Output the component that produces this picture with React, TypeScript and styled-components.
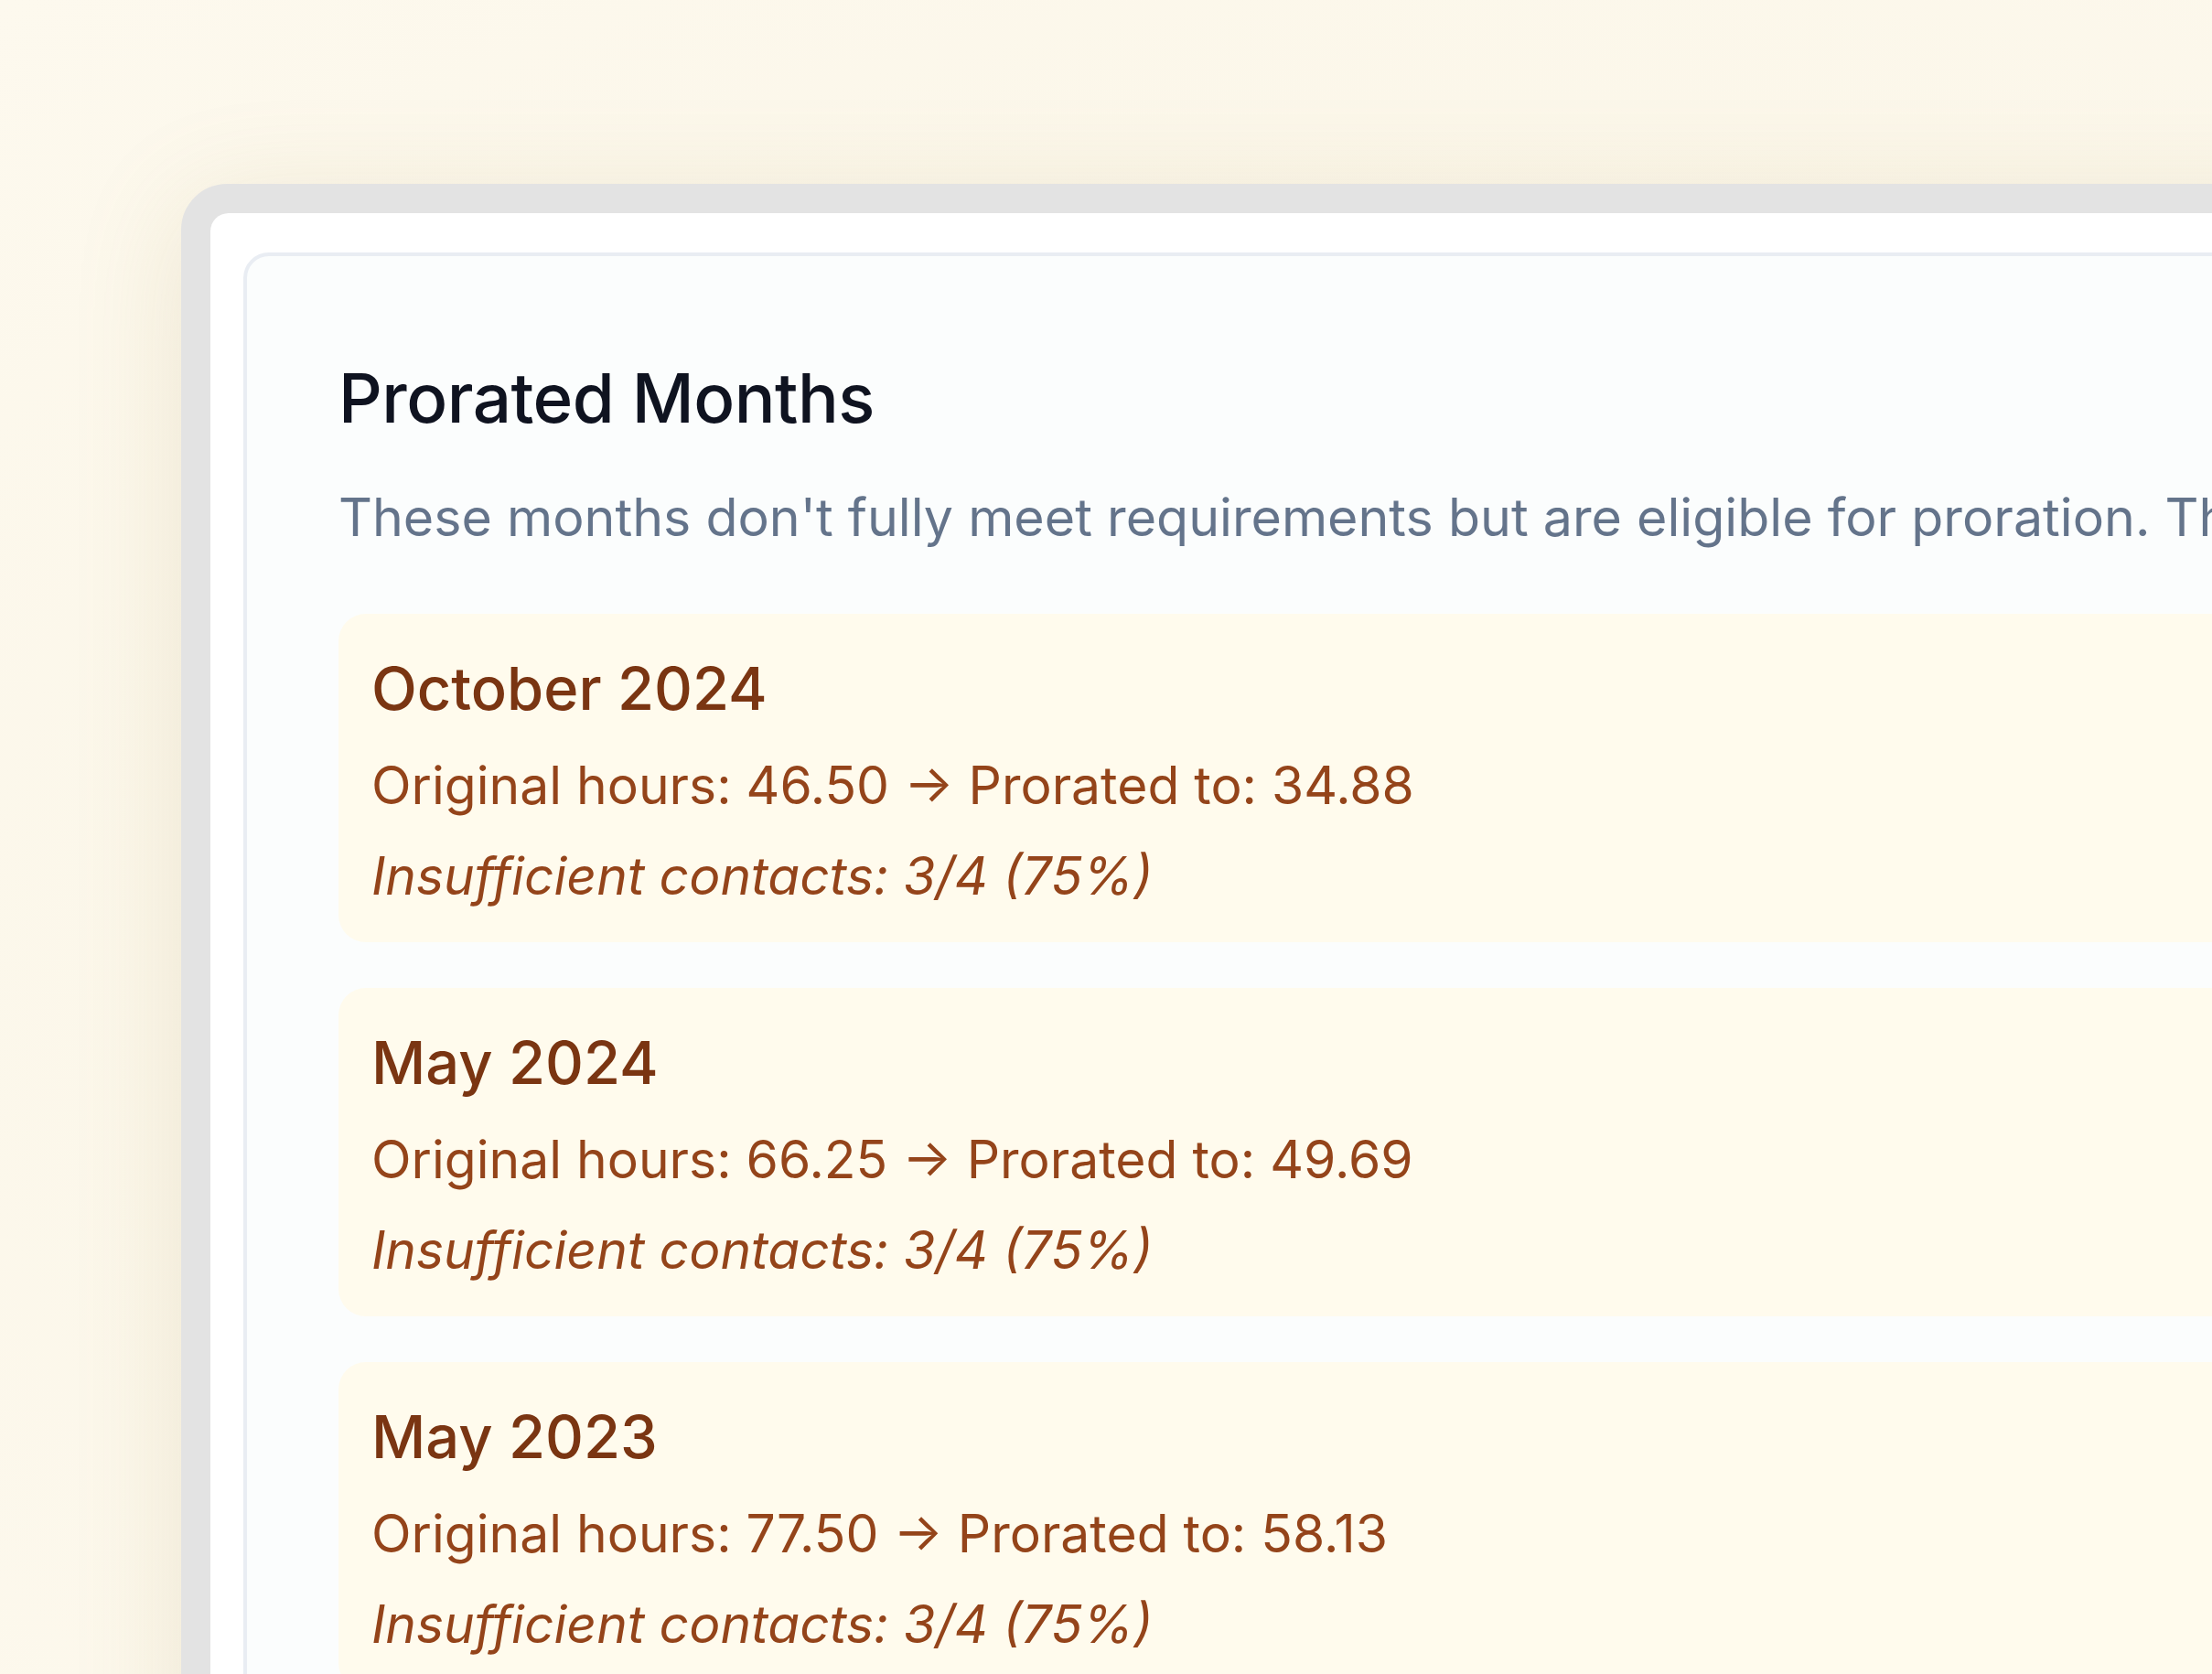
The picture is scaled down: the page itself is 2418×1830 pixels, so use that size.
import styled, { createGlobalStyle } from 'styled-components';

const GlobalStyle = createGlobalStyle`
	html, body {
		margin: 0;
		padding: 0;
		overflow: hidden;
		background: #fdf8ec;
	}
	body {
		font-family: Inter, 'Noto Sans', 'Liberation Sans', sans-serif;
		-webkit-font-smoothing: antialiased;
	}
`;

type ProratedMonth = {
	label: string;
	original: string;
	prorated: string;
	contacts: string;
};

const months: ProratedMonth[] = [
	{ label: 'October 2024', original: '46.50', prorated: '34.88', contacts: '3/4 (75%)' },
	{ label: 'May 2024', original: '66.25', prorated: '49.69', contacts: '3/4 (75%)' },
	{ label: 'May 2023', original: '77.50', prorated: '58.13', contacts: '3/4 (75%)' },
];

const App = () => {
	return (
		<>
			<GlobalStyle />
			<Page>
				<Frame>
					<Window>
						<Panel>
							<Title>Prorated Months</Title>
							<Subtitle>
								These months don't fully meet requirements but are eligible for proration. The
								hours below have been adjusted to reflect the contacts completed.
							</Subtitle>
							<MonthList>
								{months.map((m) => (
									<MonthCard key={m.label}>
										<MonthName>{m.label}</MonthName>
										<MonthLine>
											Original hours: {m.original} → Prorated to: {m.prorated}
										</MonthLine>
										<MonthNote>Insufficient contacts: {m.contacts}</MonthNote>
									</MonthCard>
								))}
							</MonthList>
						</Panel>
					</Window>
				</Frame>
			</Page>
		</>
	);
};

const Page = styled.div`
	width: 100vw;
	height: 100vh;
	overflow: hidden;
	padding: 201px 0 0 198px;
	box-sizing: border-box;
	background: radial-gradient(ellipse at 70% 60%, #f6f1e2 0%, #fbf6e8 45%, #fdf9ee 100%);
`;

const Frame = styled.div`
	width: 3600px;
	padding: 32px;
	border-radius: 50px;
	background: #e3e3e3;
	box-shadow: 0 20px 120px rgba(160, 140, 80, 0.16);
`;

const Window = styled.div`
	padding: 43px 36px;
	border-radius: 20px;
	background: #ffffff;
`;

const Panel = styled.div`
	padding: 110px 100px 100px;
	border: 4px solid #e9edf3;
	border-radius: 28px;
	background: #fbfdfd;
`;

const Title = styled.h2`
	margin: 0;
	font-size: 74.5px;
	line-height: 91px;
	font-weight: 500;
	color: #0f1320;
	letter-spacing: -0.5px;
`;

const Subtitle = styled.p`
	margin: 44px 0 0;
	font-size: 57.3px;
	line-height: 1.4;
	font-weight: 400;
	color: #64748b;
	white-space: nowrap;
`;

const MonthList = styled.div`
	display: flex;
	flex-direction: column;
	gap: 50px;
	margin-top: 66px;
`;

const MonthCard = styled.div`
	display: flex;
	flex-direction: column;
	gap: 19px;
	padding: 35px 36px 32px;
	border-radius: 30px;
	background: #fffbed;
`;

const MonthName = styled.div`
	font-size: 65px;
	line-height: 94px;
	font-weight: 500;
	color: #7a3512;
`;

const MonthLine = styled.div`
	font-size: 57px;
	line-height: 80px;
	font-weight: 400;
	color: #94441a;
`;

const MonthNote = styled(MonthLine)`
	font-style: italic;
`;

export default App;
